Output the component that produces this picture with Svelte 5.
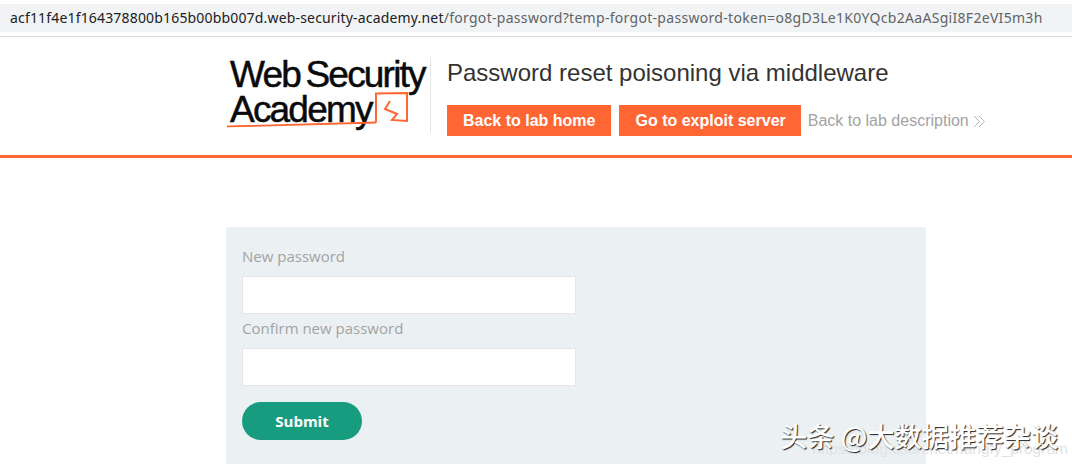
<script lang="ts">
    const host = 'acf11f4e1f164378800b165b00bb007d.web-security-academy.net';
    const path = '/forgot-password?temp-forgot-password-token=o8gD3Le1K0YQcb2AaASgiI8F2eVI5m3h';
    const fields = ['New password', 'Confirm new password'];
</script>

<div class="page">
    <div class="address-bar"><span class="host">{host}</span><span class="path">{path}</span></div>

    <header class="academy-header">
        <div class="logo">
            <div class="logo-text">
                <span class="logo-line">Web Security</span>
                <span class="logo-line">Academy</span>
            </div>
            <svg class="logo-mark" width="200" height="42" viewBox="0 0 200 42" fill="none" stroke="#ff6633" stroke-width="2" aria-hidden="true">
                <path d="M0 36.500C50 35.500 100 34 149 32.500" stroke-width="1.800" />
                <path d="M149 32.500 L149 3.500 L180 3 L180 31 L165 30 L170 24 L158 19 L163 11" />
            </svg>
        </div>
        <div class="title-area">
            <h2>Password reset poisoning via middleware</h2>
            <div class="actions">
                <a class="btn" href="#lab">Back to lab home</a>
                <a class="btn" href="#exploit">Go to exploit server</a>
                <a class="back-link" href="#desc">Back to lab description
                    <svg width="13" height="13" viewBox="0 0 13 13" fill="none" stroke="#b3b3b3" aria-hidden="true">
                        <path d="M1 1 L6.500 6.500 L1 12" />
                        <path d="M6 1 L11.500 6.500 L6 12" />
                    </svg>
                </a>
            </div>
        </div>
    </header>

    <main class="content">
        <form class="panel">
            {#each fields as label}
                <label for={label}>{label}</label>
                <input id={label} type="password" />
            {/each}
            <button type="button">Submit</button>
        </form>
    </main>

    <div class="csdn-mark">https://blog.csdn.net/hangfy_program</div>
    <div class="watermark">头条 @大数据推荐杂谈</div>
</div>

<style>
    :global(body) {
        margin: 0;
        background: #fff;
    }

    .page {
        position: relative;
        width: 1072px;
        height: 464px;
        overflow: hidden;
        font-family: "Open Sans", sans-serif;
    }

    .address-bar {
        height: 28px;
        margin: 4px 0;
        padding-left: 10px;
        background: #f1f3f4;
        box-shadow: 0 4px 0 #fff, 0 5px 0 #dadada;
        font-family: "Noto Sans", sans-serif;
        font-size: 14px;
        line-height: 28px;
        white-space: nowrap;
    }

    .host {
        color: #202124;
        letter-spacing: 0.17px;
    }

    .path {
        color: #5f6368;
        letter-spacing: 0.3px;
    }

    .academy-header {
        display: flex;
        box-sizing: border-box;
        height: 122px;
        padding: 21px 0 0 228px;
        border-bottom: 3px solid #ff6633;
    }

    .logo {
        position: relative;
        width: 202px;
        height: 76px;
        border-right: 1px solid #e6e6e6;
    }

    .logo-text {
        display: flex;
        flex-direction: column;
        margin-left: 2px;
        font-family: "Liberation Sans", sans-serif;
        font-size: 37px;
        line-height: 35px;
        letter-spacing: -1.800px;
        word-spacing: -3px;
        color: #0a0a0a;
        -webkit-text-stroke: 0.5px #0a0a0a;
    }

    .logo-mark {
        position: absolute;
        left: -1px;
        top: 33px;
    }

    .title-area {
        padding-left: 16px;
    }

    h2 {
        margin: 0;
        padding-top: 1px;
        font-family: "Liberation Sans", sans-serif;
        font-size: 24px;
        font-weight: 400;
        line-height: 30px;
        color: #333332;
    }

    .actions {
        display: flex;
        align-items: center;
        margin-top: 17px;
        font-family: "Liberation Sans", sans-serif;
        font-size: 16px;
    }

    .btn {
        display: block;
        padding: 0 16px;
        margin-right: 8px;
        line-height: 31px;
        background: #ff6633;
        color: #fff;
        font-weight: 700;
        text-decoration: none;
    }

    .btn + .btn {
        padding: 0 15px 0 16px;
        margin-right: 7px;
    }

    .back-link {
        color: #a3a3a3;
        text-decoration: none;
    }

    .back-link svg {
        vertical-align: -2px;
    }

    .content {
        padding: 69px 0 0 226px;
    }

    .panel {
        display: flex;
        flex-direction: column;
        align-items: flex-start;
        box-sizing: border-box;
        width: 700px;
        height: 240px;
        padding: 18px 16px;
        background: #ebf0f2;
    }

    label {
        height: 23px;
        font-size: 15px;
        line-height: 23px;
        color: #a3a3a3;
    }

    input {
        box-sizing: border-box;
        width: 334px;
        height: 38px;
        margin: 8px 0 3px;
        border: 1px solid #e6e6e6;
        background: #fff;
    }

    button {
        width: 120px;
        height: 38px;
        margin-top: 13px;
        border: 0;
        border-radius: 19px;
        background: #189c7f;
        color: #fff;
        font-family: "Open Sans", sans-serif;
        font-size: 15px;
        font-weight: 700;
    }

    .csdn-mark {
        position: absolute;
        left: 812px;
        top: 440px;
        font-family: "Liberation Sans", sans-serif;
        font-size: 15.500px;
        line-height: 18px;
        color: #dfe3e5;
        white-space: nowrap;
    }

    .watermark {
        position: absolute;
        left: 780px;
        top: 420px;
        font-family: "Noto Sans CJK SC", sans-serif;
        font-size: 27.300px;
        font-weight: 500;
        line-height: 30px;
        color: #fff;
        text-shadow: 1px 1px 1px #222;
        white-space: nowrap;
    }
</style>
